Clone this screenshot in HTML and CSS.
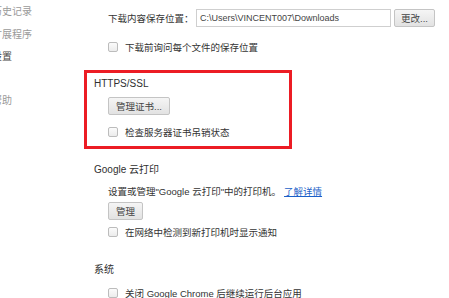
FILE: index.html
```html
<!DOCTYPE html>
<html>
<head>
<meta charset="utf-8">
<link rel="stylesheet" href="styles.css">
</head>
<body>
<div class="page">
  <nav class="sidebar">
    <div class="nav-item">历史记录</div>
    <div class="nav-item">扩展程序</div>
    <div class="nav-item selected">设置</div>
    <div class="nav-item gap">帮助</div>
  </nav>
  <main class="main">
    <div class="section plain">
      <div class="row download-row">
        <span class="label">下载内容保存位置：</span>
        <span class="input">C:\Users\VINCENT007\Downloads</span>
        <span class="btn btn-change">更改...</span>
      </div>
      <div class="row check-row first-check">
        <span class="checkbox"></span><span>下载前询问每个文件的保存位置</span>
      </div>
    </div>

    <div class="section boxed">
      <div class="heading">HTTPS/SSL</div>
      <div class="indent">
        <span class="btn btn-cert">管理证书...</span>
        <div class="row check-row ssl-check">
          <span class="checkbox"></span><span>检查服务器证书吊销状态</span>
        </div>
      </div>
    </div>

    <div class="section plain print">
      <div class="heading">Google 云打印</div>
      <div class="indent">
        <div class="row desc">设置或管理"Google 云打印"中的打印机。 <a class="link" href="#">了解详情</a></div>
        <span class="btn btn-manage">管理</span>
        <div class="row check-row print-check">
          <span class="checkbox"></span><span>在网络中检测到新打印机时显示通知</span>
        </div>
      </div>
    </div>

    <div class="section plain system">
      <div class="heading">系统</div>
      <div class="indent">
        <div class="row check-row sys-check">
          <span class="checkbox"></span><span>关闭 Google Chrome 后继续运行后台应用</span>
        </div>
      </div>
    </div>
  </main>
</div>
</body>
</html>
```

FILE: styles.css
```css
html, body {
  margin: 0;
  padding: 0;
  background: #ffffff;
  overflow: hidden;
}

body {
  font-family: "Liberation Sans", "Noto Sans CJK SC", sans-serif;
  font-size: 9.5px;
  color: #333333;
}

.page {
  display: flex;
  width: 449px;
  height: 298px;
}

.sidebar {
  width: 84px;
  flex: none;
  padding-top: 1px;
  box-sizing: border-box;
  overflow: hidden;
}

.nav-item {
  height: 22.5px;
  line-height: 22.5px;
  font-size: 10px;
  color: #9a9a9a;
  white-space: nowrap;
  margin-left: -8px;
}

.nav-item.selected {
  color: #4a4a4a;
}

.nav-item.gap {
  margin-top: 21px;
}

.main {
  flex: 1;
  min-width: 0;
}

.section.plain {
  padding-left: 10px;
}

.row {
  display: flex;
  align-items: center;
  white-space: nowrap;
}

.indent {
  padding-left: 14px;
}

.download-row {
  margin-top: 9px;
  height: 18px;
  padding-left: 14px;
}

.label {
  width: 88px;
  flex: none;
}

.input {
  width: 190px;
  height: 16px;
  border: 1px solid #cfcfcf;
  line-height: 16px;
  padding-left: 3px;
  box-sizing: content-box;
  font-size: 9px;
  color: #444;
  margin-right: 3px;
  overflow: hidden;
}

.btn {
  display: inline-flex;
  align-items: center;
  justify-content: center;
  height: 16px;
  padding: 0 7px;
  border: 1px solid #c4c4c4;
  border-radius: 2px;
  background: linear-gradient(#f5f5f5, #e2e2e2);
  color: #444;
  white-space: nowrap;
}

.btn-change {
  width: 25px;
}

.check-row {
  height: 16px;
}

.checkbox {
  width: 8px;
  height: 8px;
  border: 1px solid #bcbcbc;
  border-radius: 2px;
  background: linear-gradient(#fbfbfb, #ececec);
  margin-right: 7px;
  flex: none;
}

.first-check {
  margin-top: 12px;
  padding-left: 14px;
}

.boxed {
  margin-top: 15px;
  width: 208px;
  box-sizing: border-box;
  border: 3px solid #ec1c24;
  padding: 3px 0 6px 7px;
}

.heading {
  height: 16px;
  line-height: 16px;
  font-size: 10px;
  color: #303030;
}

.btn-cert {
  margin-top: 5px;
}

.ssl-check {
  margin-top: 9px;
}

.print {
  margin-top: 13px;
}

.desc {
  margin-top: 5px;
  height: 16px;
}

.link {
  color: #1a5fc8;
  text-decoration: underline;
  margin-left: 3px;
}

.btn-manage {
  margin-top: 3px;
}

.print-check {
  margin-top: 4px;
}

.system {
  margin-top: 22px;
}

.sys-check {
  margin-top: 7px;
}
```
